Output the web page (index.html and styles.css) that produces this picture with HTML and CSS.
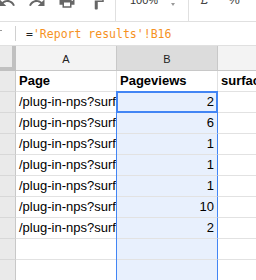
FILE: index.html
```html
<!DOCTYPE html>
<html>
<head>
  <title>Report results</title>
  <meta name="viewport" content="width=device-width, initial-scale=1.0">
  <link rel="stylesheet" href="styles.css">
</head>
<body>
  <div class="toolbar">
    <div class="tools">
      <div class="btn">
        <svg viewBox="0 0 24 24" width="18" height="18"><path d="M12.5 8c-2.65 0-5.050.99-6.9 2.6L2 7v9h9l-3.62-3.62c1.39-1.16 3.16-1.88 5.12-1.88 3.54 0 6.55 2.31 7.6 5.5l2.370-.78C21.08 11.03 17.15 8 12.5 8z"/></svg>
      </div>
      <div class="btn">
        <svg viewBox="0 0 24 24" width="18" height="18"><path d="M18.4 10.6C16.55 8.99 14.15 8 11.5 8c-4.65 0-8.58 3.03-9.96 7.22L3.9 16c1.05-3.19 4.05-5.5 7.6-5.5 1.95 0 3.73.72 5.12 1.88L13 16h9V7l-3.6 3.6z"/></svg>
      </div>
      <div class="btn print">
        <svg viewBox="0 0 24 24" width="18" height="18"><path d="M19 8H5c-1.66 0-3 1.34-3 3v6h4v4h12v-4h4v-6c0-1.66-1.34-3-3-3zm-3 11H8v-5h8v5zm3-7c-.55 0-1-.45-1-1s.45-1 1-1 1 .45 1 1-.45 1-1 1zm-1-9H6v4h12V3z"/></svg>
      </div>
      <div class="btn paint">
        <svg viewBox="0 0 24 24" width="18" height="18"><path d="M18 4V3c0-.55-.45-1-1-1H5c-.55 0-1 .45-1 1v4c0 .55.45 1 1 1h12c.55 0 1-.45 1-1V6h1v4H9v11c0 .55.45 1 1 1h2c.55 0 1-.45 1-1v-9h8V4h-3z"/></svg>
      </div>
      <div class="sep"></div>
      <div class="zoom">100%</div>
      <div class="caret"></div>
      <div class="sep"></div>
      <div class="fmt">£</div>
      <div class="fmt">%</div>
    </div>
  </div>

  <div class="formula">
    <div class="fx"><span class="dash"></span></div>
    <div class="expr">=<span class="ref">'Report results'!B16</span></div>
  </div>

  <div class="sheet">
    <div class="corner"></div>
    <div class="colhead">A</div>
    <div class="colhead on">B</div>
    <div class="colhead">C</div>

    <div class="rowhead"></div>
    <div class="cell bold">Page</div>
    <div class="cell bold">Pageviews</div>
    <div class="cell bold">surface</div>

    <div class="rowhead"></div>
    <div class="cell">/plug-in-nps?surface=web</div>
    <div class="cell num sel active">2</div>
    <div class="cell"></div>

    <div class="rowhead"></div>
    <div class="cell">/plug-in-nps?surface=web</div>
    <div class="cell num sel">6</div>
    <div class="cell"></div>

    <div class="rowhead"></div>
    <div class="cell">/plug-in-nps?surface=web</div>
    <div class="cell num sel">1</div>
    <div class="cell"></div>

    <div class="rowhead"></div>
    <div class="cell">/plug-in-nps?surface=web</div>
    <div class="cell num sel">1</div>
    <div class="cell"></div>

    <div class="rowhead"></div>
    <div class="cell">/plug-in-nps?surface=web</div>
    <div class="cell num sel">1</div>
    <div class="cell"></div>

    <div class="rowhead"></div>
    <div class="cell">/plug-in-nps?surface=web</div>
    <div class="cell num sel">10</div>
    <div class="cell"></div>

    <div class="rowhead"></div>
    <div class="cell">/plug-in-nps?surface=web</div>
    <div class="cell num sel">2</div>
    <div class="cell"></div>

    <div class="rowhead"></div>
    <div class="cell"></div>
    <div class="cell sel"></div>
    <div class="cell"></div>

    <div class="rowhead"></div>
    <div class="cell"></div>
    <div class="cell sel"></div>
    <div class="cell"></div>
  </div>
</body>
</html>
```

FILE: styles.css
```css
/* spreadsheet crop */
body {
  margin: 0;
  width: 256px;
  height: 280px;
  overflow: hidden;
  background: #fff;
  font-family: "Liberation Sans", Arial, sans-serif;
  color: #000;
}

/* toolbar, cut off at the top */
.toolbar {
  height: 21px;
  border-bottom: 1px solid #e0e0e0;
  overflow: hidden;
}
.tools {
  display: flex;
  align-items: flex-start;
  margin-top: -6px;
  margin-left: -8px;
  height: 27px;
}
.btn {
  width: 30px;
  flex: none;
  display: flex;
  justify-content: center;
}
.btn svg {
  fill: #666;
}
.btn.print {
  margin-top: -2px;
}
.btn.paint {
  margin-top: -1px;
}
.sep {
  flex: none;
  width: 1px;
  height: 27px;
  background: #e0e0e0;
  margin-left: 3px;
}
.zoom {
  flex: none;
  margin-left: 14px;
  width: 32px;
  font-size: 11px;
  line-height: 11px;
  color: #333;
  margin-top: 1px;
}
.caret {
  flex: none;
  margin-left: 9px;
  margin-top: 9px;
  width: 0;
  height: 0;
  border-left: 2.5px solid transparent;
  border-right: 2.5px solid transparent;
  border-top: 3px solid #999;
  margin-right: 10px;
}
.fmt {
  flex: none;
  width: 30px;
  text-align: center;
  font-size: 13px;
  line-height: 12px;
  color: #444;
}
.fmt:first-of-type {
  margin-left: 3px;
}

/* formula bar */
.formula {
  display: flex;
  align-items: center;
  height: 23px;
  border-bottom: 1px solid #e0e0e0;
}
.fx {
  width: 15px;
  height: 15px;
  border-right: 1px solid #d0d0d0;
  position: relative;
}
.dash {
  position: absolute;
  left: 0;
  top: 4px;
  width: 2px;
  height: 1px;
  background: #999;
}
.expr {
  margin-left: 10px;
  font-family: "DejaVu Sans Mono", "Liberation Mono", monospace;
  font-size: 11.5px;
  color: #222;
  white-space: nowrap;
}
.ref {
  color: #f6921e;
}

/* grid: column C runs on past the right edge */
.sheet {
  display: grid;
  grid-template-columns: 16px 101px 101px 101px;
  grid-template-rows: 25px;
  grid-auto-rows: 21px;
}
.corner {
  background: #ebebeb;
  border-right: 4px solid #c0c0c0;
  border-bottom: 4px solid #c0c0c0;
}
.colhead {
  background: #f3f3f3;
  border-right: 1px solid #c8c8c8;
  border-bottom: 1px solid #c8c8c8;
  font-size: 11px;
  color: #222;
  display: flex;
  align-items: center;
  justify-content: center;
  padding-top: 1px;
}
.colhead.on {
  background: #dcdcdc;
}
.rowhead {
  background: #eaeaea;
  border-right: 1px solid #c8c8c8;
  border-bottom: 1px solid #d8d8d8;
}
.cell {
  border-right: 1px solid #e2e2e2;
  border-bottom: 1px solid #e2e2e2;
  font-size: 13px;
  line-height: 20px;
  padding: 0 3px;
  white-space: nowrap;
  overflow: hidden;
}
.bold {
  font-weight: bold;
}
.num {
  text-align: right;
}
.sel {
  background: #e8f0fd;
  border-right-color: #4285f4;
  box-shadow: -1px 0 0 #4285f4;
}
.active {
  position: relative;
  overflow: visible;
}
.active::after {
  content: "";
  position: absolute;
  top: -1px;
  left: -1px;
  right: -1px;
  bottom: -1px;
  border: 2px solid #4285f4;
}
```
